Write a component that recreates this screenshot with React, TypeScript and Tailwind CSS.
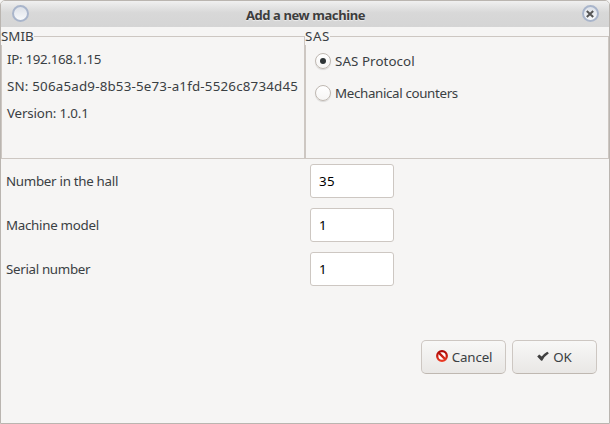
import { useState } from "react";

function Group({ title, children, className }: { title: string; children: React.ReactNode; className: string }) {
  return (
    <fieldset className="h-[132px] w-[304px] min-w-0 border border-[#cdc7c2]">
      <legend className={`-ml-px h-[18px] whitespace-nowrap leading-[18px] ${className}`}>{title}</legend>
      {children}
    </fieldset>
  );
}

function Radio({ checked, label, onSelect, className }: { checked: boolean; label: string; onSelect: () => void; className: string }) {
  return (
    <button type="button" role="radio" aria-checked={checked} onClick={onSelect} className="flex h-8 items-center gap-1">
      <span className="flex size-4 shrink-0 items-center justify-center rounded-full border border-[#bfb8b1] bg-linear-to-b from-white to-[#f6f5f4] shadow-[0_1px_1px_rgba(0,0,0,0.12)]">
        {checked && <span className="size-1.5 rounded-full bg-[#2e3436]" />}
      </span>
      <span className={`whitespace-nowrap ${className}`}>{label}</span>
    </button>
  );
}

function Field({ label, value, className }: { label: string; value: string; className: string }) {
  return (
    <label className="flex h-[34px] items-center">
      <span className="w-[304px] whitespace-nowrap">
        <span className={className}>{label}</span>
      </span>
      <input
        defaultValue={value}
        className="h-[34px] w-[84px] rounded-[3px] border border-[#cdc7c2] bg-white px-2 tracking-[0.3px] text-black outline-none"
      />
    </label>
  );
}

export default function App() {
  const [mode, setMode] = useState("sas");
  return (
    <div className="h-[424px] w-[610px] bg-[#f6f5f4] font-['Noto_Sans',sans-serif] text-[13.33px] leading-[18px] text-[#3a4043]">
      <div className="flex h-full flex-col overflow-hidden rounded-t-[5px] border border-[#bab5b0]">
        <header className="flex h-[26px] shrink-0 items-center justify-between bg-linear-to-b from-[#f0f0f0] via-[#d8d8d8] via-45% to-[#d5d5d5] pr-[10px] pl-[11px]">
          <span className="mb-px size-[17px] rounded-full border-2 border-[#a9b5cb] bg-linear-to-b from-[#dde1e8] to-[#f8f9fb]" />
          <h1 className="mt-0.5 text-[13px] font-bold tracking-[-0.42px] text-[#3d3d3d] [text-shadow:0_1px_1px_#eee]">Add a new machine</h1>
          <button type="button" aria-label="Close" className="mb-px flex size-[17px] items-center justify-center rounded-full border-2 border-[#a9b5cb] bg-linear-to-b from-[#dde1e8] to-[#f8f9fb]">
            <svg width="8" height="8" viewBox="0 0 8 8" fill="none" stroke="#555" strokeWidth="2">
              <path d="M.8 1l6.4 6M7.2 1L.8 7" />
            </svg>
          </button>
        </header>
        <div className="flex">
          <Group title="SMIB" className="">
            <div className="flex flex-col gap-[9px] pt-[5px] pl-[5px] whitespace-nowrap">
              <p className="tracking-[-0.3px]">IP: 192.168.1.15</p>
              <p className="tracking-[0.2px]">SN: 506a5ad9-8b53-5e73-a1fd-5526c8734d45</p>
              <p className="tracking-[-0.16px]">Version: 1.0.1</p>
            </div>
          </Group>
          <Group title="SAS" className="tracking-[0.6px]">
            <div role="radiogroup" className="pl-[9px]">
              <Radio checked={mode === "sas"} onSelect={() => setMode("sas")} label="SAS Protocol" className="tracking-[0.08px]" />
              <Radio checked={mode === "mech"} onSelect={() => setMode("mech")} label="Mechanical counters" className="tracking-[-0.34px]" />
            </div>
          </Group>
        </div>
        <div className="flex flex-col gap-[10px] pt-[5px] pl-[5px]">
          <Field label="Number in the hall" value="35" className="tracking-[-0.29px]" />
          <Field label="Machine model" value="1" className="tracking-[-0.28px]" />
          <Field label="Serial number" value="1" className="tracking-[-0.32px]" />
        </div>
        <div className="mt-[54px] flex justify-end gap-1.5 pr-3">
          <button type="button" className="flex h-[34px] w-[85px] items-center justify-center gap-1 rounded-[5px] border border-[#cdc7c2] border-b-[#bfb8b1] bg-linear-to-b from-[#f8f8f7] to-[#e9e7e5] pl-px">
            <svg className="mb-0.5" width="12" height="12" viewBox="0 0 12 12" fill="none" strokeWidth="2.3">
              <defs>
                <linearGradient id="red" x1="0" y1="0" x2="0" y2="12" gradientUnits="userSpaceOnUse">
                  <stop stopColor="#a40000" />
                  <stop offset="1" stopColor="#f04028" />
                </linearGradient>
              </defs>
              <circle cx="6" cy="6" r="4.8" fill="#fff" stroke="url(#red)" />
              <path d="M2.6 2.6l6.8 6.8" stroke="url(#red)" />
            </svg>
            <span className="tracking-[-0.15px]">Cancel</span>
          </button>
          <button type="button" className="flex h-[34px] w-[85px] items-center justify-center gap-1 rounded-[5px] border border-[#cdc7c2] border-b-[#bfb8b1] bg-linear-to-b from-[#f8f8f7] to-[#e9e7e5]">
            <svg className="mb-0.5" width="12" height="12" viewBox="0 0 12 12">
              <path d="M.2 6.500L2.200 4.400l2.500 2.200Q7 3.500 10.300 1.700l1.600 1.600Q7.500 6.300 5.200 10.700H4.200z" fill="#404040" />
            </svg>
            <span>OK</span>
          </button>
        </div>
      </div>
    </div>
  );
}
